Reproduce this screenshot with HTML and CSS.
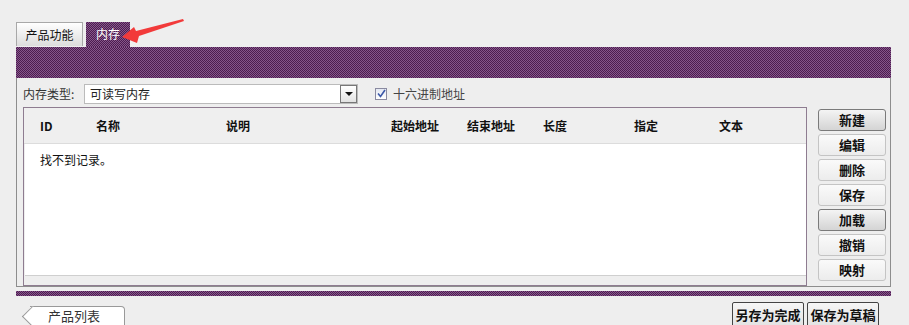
FILE: index.html
```html
<!DOCTYPE html>
<html lang="zh-CN">
  <head>
    <meta charset="UTF-8" />
    <title>内存</title>
    <link rel="stylesheet" href="styles.css">
  </head>
  <body>
    <div class="page">
      <div class="tabs">
        <div class="tab">产品功能</div>
        <div class="tab active">内存</div>
        <svg class="arrow" width="80" height="36" viewBox="0 0 80 36">
          <polygon points="7,22 19,12 21,16 68,4 69,6 24,21 22,28" fill="#f23a3a" />
        </svg>
      </div>
      <div class="band"></div>

      <div class="panel">
        <div class="toolbar">
          <span class="label">内存类型:</span>
          <div class="select">
            <span>可读写内存</span>
            <span class="drop"><i></i></span>
          </div>
          <label class="check">
            <span class="box">
              <svg width="9" height="9" viewBox="0 0 9 9">
                <path d="M1 4.5 L3.5 7.5 L8 1" fill="none" stroke="#3b58a8" stroke-width="1.6" />
              </svg>
            </span>
            十六进制地址
          </label>
        </div>

        <div class="body">
          <div class="grid">
            <div class="grid-head">
              <span class="c-id">ID</span>
              <span class="c-name">名称</span>
              <span class="c-desc">说明</span>
              <span class="c-start">起始地址</span>
              <span class="c-end">结束地址</span>
              <span class="c-len">长度</span>
              <span class="c-set">指定</span>
              <span>文本</span>
            </div>
            <div class="grid-body">
              <div class="empty">找不到记录。</div>
            </div>
            <div class="grid-foot"></div>
          </div>

          <div class="actions">
            <button class="btn pressed">新建</button>
            <button class="btn">编辑</button>
            <button class="btn">删除</button>
            <button class="btn">保存</button>
            <button class="btn pressed">加载</button>
            <button class="btn">撤销</button>
            <button class="btn">映射</button>
          </div>
        </div>
      </div>

      <div class="stripe"></div>

      <div class="footer">
        <div class="back">产品列表</div>
        <div class="save-group">
          <button class="save-btn">另存为完成</button>
          <button class="save-btn">保存为草稿</button>
        </div>
      </div>
    </div>
  </body>
</html>
```

FILE: styles.css
```css
body {
  margin: 0;
  background: #eeeeee;
  font-family: "Noto Sans CJK SC", "Liberation Sans", sans-serif;
  font-size: 12px;
  color: #222;
  overflow: hidden;
  height: 325px;
}

.page {
  width: 875px;
  margin-left: 16px;
}

/* tabs */
.tabs {
  position: relative;
  display: flex;
  gap: 3px;
  margin-top: 22px;
  height: 25px;
}

.tab {
  width: 65px;
  height: 23px;
  line-height: 23px;
  text-align: center;
  border: 1px solid #a8a8a8;
  border-bottom: none;
  background: linear-gradient(#ffffff, #dcdcdc);
  color: #111;
  font-size: 12px;
}

.tab.active {
  width: 44px;
  height: 25px;
  border: none;
  background: repeating-conic-gradient(#4c1d50 0 25%, #86568a 0 50%) 0 0 / 2px 2px;
  color: #fff;
}

.arrow {
  position: absolute;
  left: 99px;
  top: -7px;
}

.band {
  height: 31px;
  background: repeating-conic-gradient(#4c1d50 0 25%, #86568a 0 50%) 0 0 / 2px 2px;
}

/* panel */
.panel {
  border: 1px solid #8d8d8d;
  border-top: none;
  height: 208px;
  padding: 0 4px 0 6px;
}

.toolbar {
  display: flex;
  align-items: center;
  height: 29px;
}

.label {
  color: #333;
  width: 61px;
  margin-top: 2px;
}

.select {
  display: flex;
  align-items: center;
  justify-content: space-between;
  box-sizing: border-box;
  width: 274px;
  height: 20px;
  margin-top: 2px;
  border: 1px solid #bbbbbb;
  background: #fff;
  padding-left: 5px;
  color: #222;
}

.drop {
  box-sizing: border-box;
  width: 17px;
  height: 18px;
  border: 1px solid #777;
  background: linear-gradient(#ffffff, #e2e2e2);
  display: flex;
  align-items: center;
  justify-content: center;
}

.drop i {
  width: 0;
  height: 0;
  border-left: 4px solid transparent;
  border-right: 4px solid transparent;
  border-top: 4px solid #111;
}

.check {
  display: flex;
  align-items: center;
  gap: 6px;
  margin-left: 17px;
  margin-top: 2px;
  color: #444;
}

.box {
  box-sizing: border-box;
  width: 12px;
  height: 12px;
  border: 1px solid #8a8aa0;
  background: linear-gradient(#e4e8f2, #ffffff);
  display: flex;
  align-items: center;
  justify-content: center;
}

.body {
  display: flex;
  gap: 11px;
}

/* grid */
.grid {
  box-sizing: border-box;
  width: 784px;
  height: 179px;
  border: 1px solid #8e7c90;
  display: flex;
  flex-direction: column;
}

.grid-head {
  display: flex;
  height: 35px;
  align-items: center;
  padding-left: 16px;
  background: #efefef;
  border-bottom: 1px solid #dcdcdc;
  font-weight: bold;
  color: #111;
}

.c-id { width: 56px; }
.c-name { width: 130px; }
.c-desc { width: 165px; }
.c-start { width: 76px; }
.c-end { width: 76px; }
.c-len { width: 91px; }
.c-set { width: 85px; }

.grid-body {
  flex: 1;
  background: #fff;
  border-bottom: 1px solid #cfcfcf;
  margin-left: 1px;
}

.empty {
  padding: 7px 0 0 15px;
  color: #111;
}

.grid-foot {
  height: 9px;
  background: #eeeeee;
}

/* side buttons */
.actions {
  display: flex;
  flex-direction: column;
  gap: 3px;
  padding-top: 2px;
}

.btn {
  box-sizing: border-box;
  width: 68px;
  height: 22px;
  border: 1px solid #c4c4c4;
  border-radius: 3px;
  background: linear-gradient(#fafafa, #ececec);
  font-family: inherit;
  font-size: 13px;
  font-weight: bold;
  color: #111;
  padding: 0;
  line-height: 18px;
}

.btn.pressed {
  border-color: #7a7a7a;
  background: linear-gradient(#f4f4f4, #d4d4d4);
}

.stripe {
  height: 5px;
  margin-top: 4px;
  background: repeating-conic-gradient(#4c1d50 0 25%, #86568a 0 50%) 0 0 / 2px 2px;
}

/* footer */
.footer {
  display: flex;
  justify-content: space-between;
  margin-top: 6px;
  padding: 0 12px 0 10px;
}

.back {
  position: relative;
  box-sizing: border-box;
  width: 95px;
  height: 24px;
  margin-top: 4px;
  margin-left: 4px;
  border: 1px solid #999;
  border-left: none;
  border-radius: 0 4px 4px 0;
  background: #fff;
  color: #333;
  font-size: 13px;
  line-height: 18px;
  padding-left: 18px;
}

.back::before {
  content: "";
  position: absolute;
  left: -5px;
  top: 2px;
  width: 14px;
  height: 14px;
  border-left: 1px solid #999;
  border-bottom: 1px solid #999;
  background: #fff;
  transform: rotate(45deg);
}

.save-group {
  display: flex;
  gap: 3px;
}

.save-btn {
  box-sizing: border-box;
  width: 72px;
  height: 26px;
  border: 1px solid #444;
  border-radius: 2px;
  background: linear-gradient(#f6f6f6, #e2e2e2);
  font-family: inherit;
  font-size: 13px;
  font-weight: bold;
  color: #111;
  padding: 0;
  line-height: 20px;
  text-align: center;
}
```
